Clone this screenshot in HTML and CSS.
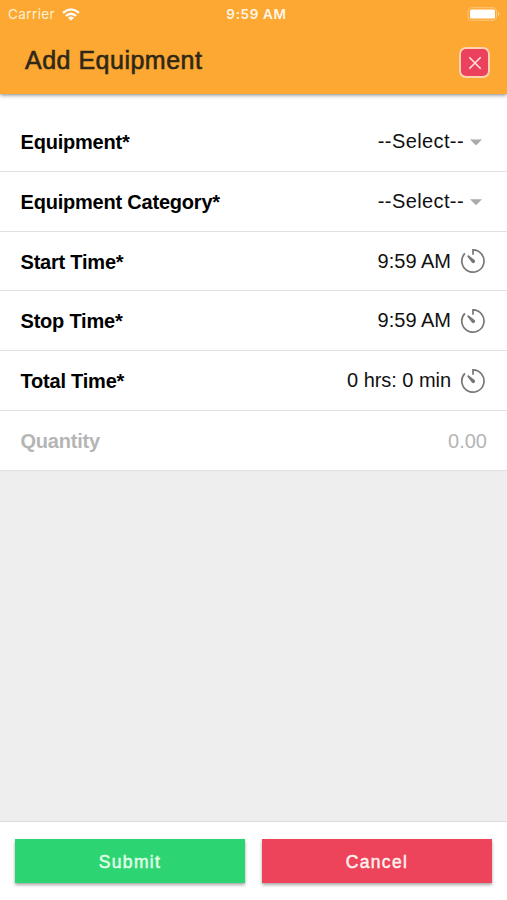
FILE: index.html
```html
<!DOCTYPE html>
<html lang="en">
<head>
<meta charset="utf-8">
<title>Add Equipment</title>
<link rel="stylesheet" href="styles.css">
</head>
<body>
<svg width="0" height="0" class="defs" aria-hidden="true">
  <symbol id="timer" viewBox="0 0 26 26">
    <path d="M13 6.8V1.9A11.1 11.1 0 1 1 4.9 5.3" fill="none" stroke="#777" stroke-width="1.7"/>
    <path d="M7.1 8.2 8.2 7.1 14.6 11.9A1.6 1.6 0 0 1 11.9 14.6Z" fill="#777"/>
  </symbol>
</svg>
<div class="screen">
  <header class="header">
    <div class="status">
      <div class="carrier"><span>Carrier</span>
        <svg class="wifi" viewBox="0 0 18 13" width="18" height="13"><g fill="none" stroke="#fff" stroke-width="2.3"><path d="M1 4.8Q9-2 17 4.8"/><path d="M3.9 7.9Q9 3.5 14.1 7.9"/></g><path d="M6 9.7Q9 7.4 12 9.7L9 12.7Z" fill="#fff"/></svg>
      </div>
      <span class="clock">9:59 AM</span>
      <svg class="battery" viewBox="0 0 33 14" width="33" height="14"><rect x="1" y=".7" width="28.5" height="12.6" rx="3.5" fill="none" stroke="#fdc67d" stroke-width="1"/><rect x="3" y="2.5" width="25" height="9" rx="1.6" fill="#fff"/><path d="M31 5V9Q32.4 8.4 32.4 7T31 5Z" fill="#fdd299"/></svg>
    </div>
    <div class="titlebar">
      <h1>Add Equipment</h1>
      <button class="close" aria-label="Close"><svg viewBox="0 0 14 14" width="14" height="14"><path d="M1.3 1.3 12.7 12.7M12.7 1.3 1.3 12.7" stroke="#ffe3dc" stroke-width="1.6"/></svg></button>
    </div>
  </header>
  <main class="form">
    <div class="row"><span class="label">Equipment*</span><span class="value select">--Select--</span><i class="caret"></i></div>
    <div class="row"><span class="label">Equipment Category*</span><span class="value select">--Select--</span><i class="caret"></i></div>
    <div class="row"><span class="label">Start Time*</span><span class="value">9:59 AM</span><svg class="timer"><use href="#timer"/></svg></div>
    <div class="row"><span class="label">Stop Time*</span><span class="value">9:59 AM</span><svg class="timer"><use href="#timer"/></svg></div>
    <div class="row"><span class="label">Total Time*</span><span class="value total">0 hrs: 0 min</span><svg class="timer"><use href="#timer"/></svg></div>
    <div class="row muted"><span class="label">Quantity</span><span class="value">0.00</span></div>
  </main>
  <footer class="footer">
    <button class="btn submit">Submit</button>
    <button class="btn cancel">Cancel</button>
  </footer>
</div>
</body>
</html>
```
FILE: styles.css
```css
* { box-sizing: border-box; }
body { margin: 0; font-family: "Liberation Sans", Arial, sans-serif; }
.defs { position: absolute; }
.screen { height: 900px; display: flex; flex-direction: column; background: #eee; overflow: hidden; }
.header { height: 94px; flex: none; background: #fca832; box-shadow: 0 1px 4px rgba(0,0,0,.5); z-index: 1; }
.status { height: 27px; padding: 1px 5px 0 8px; display: grid; grid-template-columns: 1fr auto 1fr; align-items: center; color: #fff0d2; font: 13.5px/26px Inter, sans-serif; }
.carrier { display: flex; align-items: center; gap: 7px; }
.carrier span { letter-spacing: .4px; }
.clock { font-weight: 600; letter-spacing: .65px; color: #fff6e6; padding-left: 3px; }
.battery { justify-self: end; margin-bottom: 1px; margin-right: 2px; }
.titlebar { height: 67px; padding: 0 17px 0 25px; display: flex; justify-content: space-between; align-items: flex-start; }
h1 { margin: 19px 0 0; font-size: 25px; line-height: 28px; font-weight: 400; letter-spacing: .5px; color: #2f2718; -webkit-text-stroke: .6px #2f2718; }
.close { width: 31px; height: 31px; margin-top: 20px; padding: 0; display: grid; place-items: center; border: 2px solid #fed3b0; border-radius: 7px; background: #eb415c; }
.form { background: #fff; padding-top: 18px; height: 377px; display: grid; grid-template-rows: repeat(6, 1fr); }
.row { display: flex; align-items: center; padding: 0 20px 0 20.5px; border-bottom: 1.5px solid #e1e1e1; font-size: 20px; color: #111; }
.label { flex: 1; font-weight: 700; letter-spacing: -.21px; color: #000; padding-top: 2px; }
.select { letter-spacing: .4px; padding-top: 1px; }
.total { letter-spacing: -.05px; }
.caret { width: 12px; height: 6px; margin: 2px 5px 0 6px; background: #aaa; clip-path: polygon(0 0, 100% 0, 50% 100%); }
.timer { width: 26px; height: 26px; margin: 0 1px 0 9px; }
.muted, .muted .label { color: #b5b5b5; }
.muted .value { padding-top: 2px; }
.footer { margin-top: auto; height: 79px; padding: 17px 15px 0; background: #fff; border-top: 1.5px solid #ddd; display: grid; grid-template-columns: 1fr 1fr; gap: 17px; }
.btn { height: 44px; border: 0; padding: 2px 0 0; font: 17.5px "Liberation Sans", sans-serif; letter-spacing: 1.3px; color: #fff0ed; -webkit-text-stroke: .5px; box-shadow: 0 2px 3px rgba(0,0,0,.35); }
.submit { background: #2dd572; color: #e2ffe9; }
.cancel { background: #ed435b; }
```
